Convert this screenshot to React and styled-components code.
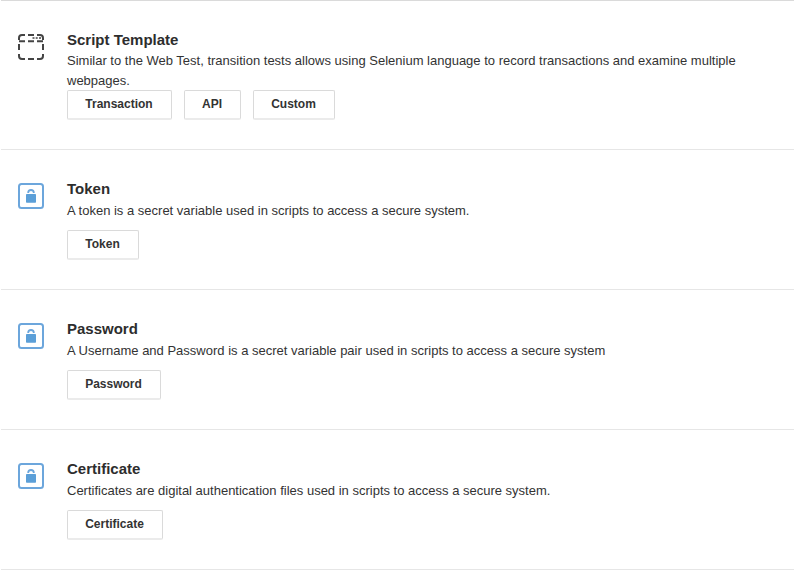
import React from "react";
import styled, { createGlobalStyle } from "styled-components";

const GlobalStyle = createGlobalStyle`
  * { box-sizing: border-box; }
  body { margin: 0; background: #fff; }
`;

const List = styled.main`
  width: 795px;
  height: 570px;
  overflow: hidden;
  padding: 0 1px;
  font-family: "Liberation Sans", Arial, sans-serif;
  font-size: 13px;
  color: #333;
`;

const Row = styled.section`
  display: flex;
  height: ${(p) => p.$height}px;
  padding: 30px 0 0 16px;
  border-top: 1px solid #e6e6e6;
  &:first-child { border-top-color: #dadada; }
  &:last-child { border-bottom: 1px solid #e6e6e6; height: 141px; }
`;

const IconBox = styled.div`
  width: 50px;
  padding-top: 2px;
  flex: none;
  svg { display: block; }
`;

const Title = styled.h2`
  margin: 0;
  font-size: 15px;
  line-height: 17px;
  font-weight: 700;
  color: #2d2d2d;
`;

const Description = styled.p`
  margin: ${(p) => (p.$wrapped ? 3 : 4)}px 0 0;
  line-height: 20px;
  max-width: 690px;
`;

const Actions = styled.div`
  display: flex;
  gap: 12px;
  margin-top: ${(p) => (p.$wrapped ? -1 : 9)}px;
`;

const Button = styled.button`
  width: ${(p) => p.$width}px;
  height: 30px;
  padding: 0 1px 2px 0;
  border: 1px solid #dadada;
  border-bottom: 2px solid #ebebeb;
  border-radius: 2px;
  background: #fff;
  color: #333;
  font: 700 12px "Liberation Sans", Arial, sans-serif;
`;

const ScriptIcon = () => (
  <svg width="28" height="28" viewBox="0 0 28 28" fill="none" stroke="#444" strokeWidth="2">
    <path d="M2 7V5a3 3 0 0 1 3-3h3M20 2h3a3 3 0 0 1 3 3v2M2 21v2a3 3 0 0 0 3 3h3M20 26h3a3 3 0 0 0 3-3v-2" />
    <path d="M11 2h6M11 26h6M2 11v6M26 11v6M2 8.3h6M11 8.3h6M20 8.3h6" />
    <path d="M15.5 5h2M18.7 5h2M22 5h2" strokeWidth="1.6" />
  </svg>
);

const LockIcon = () => (
  <svg width="28" height="28" viewBox="0 0 28 28" fill="none">
    <rect x="2" y="2" width="24" height="24" rx="2.5" stroke="#6ca6dc" strokeWidth="2" />
    <rect x="9" y="12" width="10" height="8.8" rx=".7" fill="#5b9fd8" />
    <path d="M11.2 11v-.2a2.8 2.8 0 0 1 5.6 0v.2" stroke="#6ca6dc" strokeWidth="1.8" />
  </svg>
);

const items = [
  { title: "Script Template", text: "Similar to the Web Test, transition tests allows using Selenium language to record transactions and examine multiple webpages.", buttons: [["Transaction", 105], ["API", 57], ["Custom", 82]], height: 149, script: true },
  { title: "Token", text: "A token is a secret variable used in scripts to access a secure system.", buttons: [["Token", 72]], height: 140 },
  { title: "Password", text: "A Username and Password is a secret variable pair used in scripts to access a secure system", buttons: [["Password", 94]], height: 140 },
  { title: "Certificate", text: "Certificates are digital authentication files used in scripts to access a secure system.", buttons: [["Certificate", 96]], height: 140 },
];

export default function App() {
  return (
    <>
      <GlobalStyle />
      <List>
        {items.map((item) => (
          <Row key={item.title} $height={item.height}>
            <IconBox>{item.script ? <ScriptIcon /> : <LockIcon />}</IconBox>
            <div>
              <Title>{item.title}</Title>
              <Description $wrapped={item.script}>{item.text}</Description>
              <Actions $wrapped={item.script}>
                {item.buttons.map(([label, width]) => (
                  <Button key={label} $width={width}>{label}</Button>
                ))}
              </Actions>
            </div>
          </Row>
        ))}
      </List>
    </>
  );
}
